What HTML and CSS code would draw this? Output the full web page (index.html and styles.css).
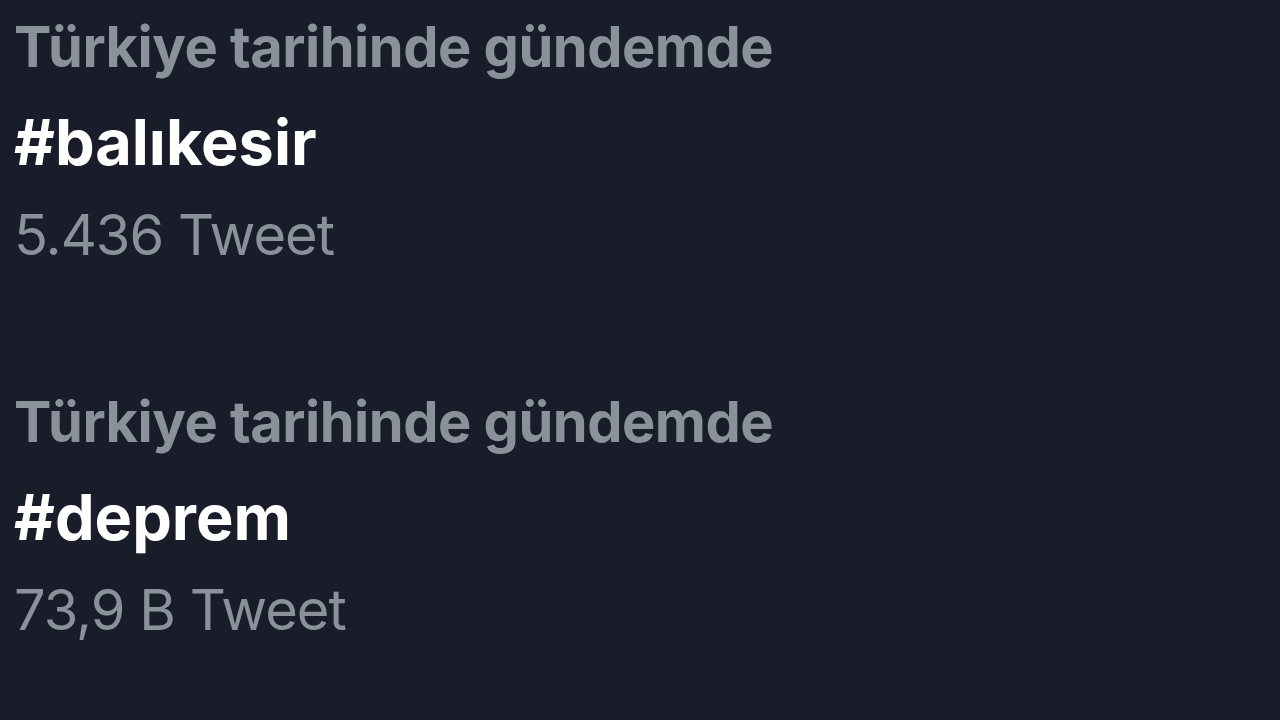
FILE: index.html
```html
<!DOCTYPE html>
<html lang="tr">
<head>
<meta charset="utf-8">
<link rel="stylesheet" href="styles.css">
</head>
<body>
<main class="trends">
  <section class="trend">
    <div class="context">Türkiye tarihinde gündemde</div>
    <div class="tag">#balıkesir</div>
    <div class="count">5.436 Tweet</div>
  </section>
  <section class="trend">
    <div class="context">Türkiye tarihinde gündemde</div>
    <div class="tag">#deprem</div>
    <div class="count">73,9 B Tweet</div>
  </section>
</main>
</body>
</html>
```
FILE: styles.css
```css
html, body {
  margin: 0;
  padding: 0;
  background: #181d29;
  width: 1280px;
  height: 720px;
  overflow: hidden;
}
.trends {
  display: flex;
  flex-direction: column;
  gap: 99px;
  padding: 2px 0 0 14px;
  font-family: Inter, "Noto Sans", sans-serif;
}
.trend {
  display: flex;
  flex-direction: column;
}
.context {
  color: #8b919b;
  font-size: 56px;
  font-weight: 700;
  line-height: 90px;
  letter-spacing: -0.5px;
}
.tag {
  color: #ffffff;
  font-size: 63px;
  font-weight: 700;
  line-height: 100px;
}
.count {
  color: #8b919b;
  font-size: 56px;
  font-weight: 400;
  line-height: 86px;
  letter-spacing: -1px;
}
```
